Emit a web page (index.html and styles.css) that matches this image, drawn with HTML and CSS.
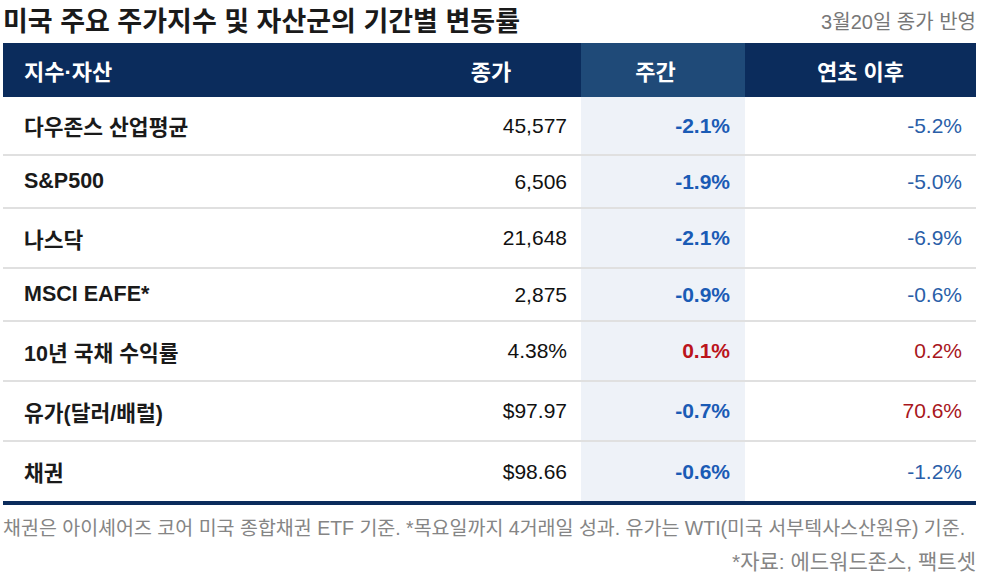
FILE: index.html
```html
<!DOCTYPE html>
<html lang="ko">
<head>
<meta charset="utf-8">
<link rel="stylesheet" href="styles.css">
</head>
<body>
<div class="page">
  <div class="head">
    <h1 class="title">미국 주요 주가지수 및 자산군의 기간별 변동률</h1>
    <div class="asof">3월20일 종가 반영</div>
  </div>
  <div class="table">
    <div class="row hdr">
      <div class="c name">지수·자산</div>
      <div class="c mid">종가</div>
      <div class="c mid wk">주간</div>
      <div class="c mid">연초 이후</div>
    </div>
    <div class="row">
      <div class="c name">다우존스 산업평균</div>
      <div class="c num">45,577</div>
      <div class="c num wk blue">-2.1%</div>
      <div class="c num ytd blue">-5.2%</div>
    </div>
    <div class="row">
      <div class="c name">S&amp;P500</div>
      <div class="c num">6,506</div>
      <div class="c num wk blue">-1.9%</div>
      <div class="c num ytd blue">-5.0%</div>
    </div>
    <div class="row">
      <div class="c name">나스닥</div>
      <div class="c num">21,648</div>
      <div class="c num wk blue">-2.1%</div>
      <div class="c num ytd blue">-6.9%</div>
    </div>
    <div class="row">
      <div class="c name">MSCI EAFE*</div>
      <div class="c num">2,875</div>
      <div class="c num wk blue">-0.9%</div>
      <div class="c num ytd blue">-0.6%</div>
    </div>
    <div class="row">
      <div class="c name">10년 국채 수익률</div>
      <div class="c num">4.38%</div>
      <div class="c num wk red">0.1%</div>
      <div class="c num ytd red">0.2%</div>
    </div>
    <div class="row">
      <div class="c name">유가(달러/배럴)</div>
      <div class="c num">$97.97</div>
      <div class="c num wk blue">-0.7%</div>
      <div class="c num ytd red">70.6%</div>
    </div>
    <div class="row">
      <div class="c name">채권</div>
      <div class="c num">$98.66</div>
      <div class="c num wk blue">-0.6%</div>
      <div class="c num ytd blue">-1.2%</div>
    </div>
  </div>
  <p class="note">채권은 아이셰어즈 코어 미국 종합채권 ETF 기준. *목요일까지 4거래일 성과. 유가는 WTI(미국 서부텍사스산원유) 기준.</p>
  <p class="source">*자료: 에드워드존스, 팩트셋</p>
</div>
</body>
</html>
```
FILE: styles.css
```css
html, body {
  margin: 0;
  padding: 0;
  background: #ffffff;
}
body {
  font-family: "Liberation Sans", "Noto Sans CJK KR", sans-serif;
  color: #111111;
}
.page {
  width: 973px;
  padding: 0 7px 0 3px;
}
.head {
  height: 43px;
  display: flex;
  align-items: center;
  justify-content: space-between;
}
.title {
  margin: 0;
  font-size: 27px;
  font-weight: 700;
  color: #1a1a1a;
  line-height: 32px;
}
.asof {
  font-size: 20px;
  color: #777777;
  line-height: 26px;
}
.table {
  border-bottom: 4px solid #0b2c5c;
}
.row {
  display: grid;
  grid-template-columns: 398px 180px 164px 231px;
  height: 58px;
  box-sizing: border-box;
  border-bottom: 2px solid #e0e0e0;
}
.row:nth-child(2) { height: 59px; }
.row:nth-child(3) { height: 53px; }
.row:nth-child(4) { height: 60px; }
.row:nth-child(5) { height: 53px; }
.row:nth-child(6) { height: 60px; }
.row:nth-child(7) { height: 60px; }
.row:nth-child(8) { height: 59px; border-bottom: none; }
.row.hdr {
  height: 54px;
  border-bottom: none;
  background: #0b2c5c;
  color: #ffffff;
}
.c {
  display: flex;
  align-items: center;
  font-size: 21px;
}
.name {
  padding-left: 21px;
  font-size: 21.5px;
  font-weight: 700;
  color: #1a1a1a;
}
.hdr .c {
  font-weight: 700;
  font-size: 22px;
  color: #ffffff;
}
.hdr .mid {
  justify-content: center;
}
.hdr .wk {
  background: #1f4a78;
}
.num {
  justify-content: flex-end;
  padding-right: 14px;
  color: #111111;
}
.wk {
  background: #eef2f8;
  font-weight: 700;
  padding-right: 15px;
}
.ytd {
  padding-right: 14px;
}
.wk.blue { color: #1a5bb5; }
.wk.red { color: #bb141c; }
.ytd.blue { color: #2a5ea8; }
.ytd.red { color: #a8161c; }
.note {
  margin: 9px 0 0;
  font-size: 19.5px;
  line-height: 28px;
  color: #858585;
  white-space: nowrap;
}
.source {
  margin: 6px 0 0;
  font-size: 21px;
  line-height: 28px;
  color: #858585;
  text-align: right;
}
```
